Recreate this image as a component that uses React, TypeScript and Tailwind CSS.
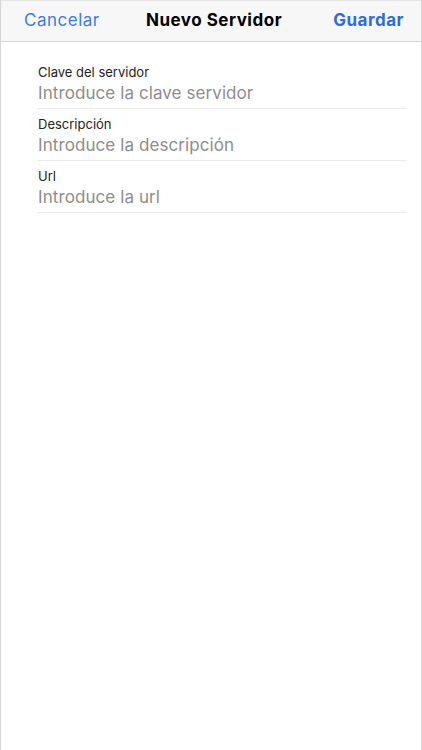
export default function App() {
  const fields = [
    { label: "Clave del servidor", placeholder: "Introduce la clave servidor" },
    { label: "Descripción", placeholder: "Introduce la descripción" },
    { label: "Url", placeholder: "Introduce la url" },
  ];

  return (
    <div
      className="h-[750px] w-[422px] flex flex-col bg-white border-x border-[#d4d4d4] overflow-hidden"
      style={{ fontFamily: 'Inter, "Noto Sans", sans-serif' }}
    >
      {/* header */}
      <div className="h-[42px] shrink-0 grid grid-cols-[1fr_auto_1fr] items-center pl-[23px] pr-[17px] bg-[#f7f7f7] border-b border-[#d9d9d9] border-t border-t-[#e6e6e6]">
        <button className="justify-self-start text-[17px] tracking-[0.03em] text-[#3b7be4]">Cancelar</button>
        <h1 className="text-[17px] font-bold tracking-[0.03em] text-black">Nuevo Servidor</h1>
        <button className="justify-self-end text-[17px] font-bold tracking-[0.03em] text-[#2d6cdc]">Guardar</button>
      </div>

      {/* form */}
      <div className="pl-[37px] pr-[14px] pt-[22px]">
        {fields.map((f) => (
          <div key={f.label} className="border-b border-[#ececec] pb-[4px] mb-[7px]">
            <label className="block mb-[2px] text-[13px] leading-[16px] text-[#222]">{f.label}</label>
            <input
              className="block w-full text-[17px] leading-[22px] tracking-[0.005em] text-[#222] placeholder-[#8d8d8d] outline-none bg-transparent"
              placeholder={f.placeholder}
            />
          </div>
        ))}
      </div>
    </div>
  );
}
